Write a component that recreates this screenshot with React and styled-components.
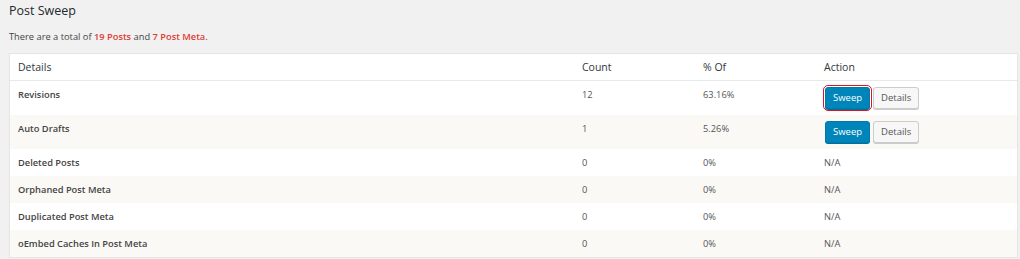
import styled, { createGlobalStyle } from "styled-components"

const GlobalStyle = createGlobalStyle`
    body {
        margin: 0;
        background: #f1f1f1;
        font-family: "Open Sans", "Noto Sans", sans-serif;
        color: #444;
    }
`

const Page = styled.div`
    padding: 2px 2px 0 9px;
`

const Title = styled.h2`
    margin: 0;
    font-size: 12.5px;
    line-height: 17px;
    font-weight: 400;
    color: #23282d;
`

const Summary = styled.p`
    margin: 11px 0 0;
    font-size: 9.3px;
    line-height: 14px;
    color: #444;
`

const Highlight = styled.span`
    color: #dd3d36;
    font-weight: 600;
`

const Table = styled.div`
    margin-top: 9px;
    background: #fff;
    border: 1px solid #e5e5e5;
    box-shadow: 0 1px 1px rgba(0, 0, 0, 0.04);
`

const Row = styled.div`
    display: grid;
    grid-template-columns: 564px 121px 121px 1fr;
    background: ${props => (props.$alt ? "#fbf9f5" : "#fff")};
    border-bottom: ${props => (props.$head ? "1px solid #e8e8e8" : "none")};
    min-height: ${props => (props.$head ? "26px" : "27px")};
`

const Cell = styled.div`
    padding: ${props => (props.$head ? "6px 8px" : "7px 8px 6px")};
    font-size: ${props => (props.$head ? "10.5px" : "9.3px")};
    line-height: 14px;
    font-weight: ${props => (props.$label ? 600 : 400)};
    color: ${props => (props.$head ? "#32373c" : props.$label ? "#444" : "#555")};
`

const Actions = styled.div`
    display: flex;
    gap: 3px;
    padding: 6px 8px 6px 9px;
`

const Button = styled.button`
    height: 22px;
    padding: 0 7px;
    border-radius: 3px;
    font-family: inherit;
    font-size: 9.5px;
    line-height: 20px;
    cursor: pointer;
    background: ${props => (props.$primary ? "#0085ba" : "#f7f7f7")};
    color: ${props => (props.$primary ? "#fff" : "#555")};
    border: 1px solid ${props => (props.$primary ? "#0079ad" : "#ccc")};
    box-shadow: 0 1px 0 ${props => (props.$primary ? "#00709f" : "#ccc")};
    outline: ${props => (props.$focus ? "1px solid #e0141e" : "none")};
    outline-offset: 1px;
`

const rows = [
    { label: "Revisions", count: 12, pct: "63.16%", action: true, focus: true },
    { label: "Auto Drafts", count: 1, pct: "5.26%", action: true },
    { label: "Deleted Posts", count: 0, pct: "0%" },
    { label: "Orphaned Post Meta", count: 0, pct: "0%" },
    { label: "Duplicated Post Meta", count: 0, pct: "0%" },
    { label: "oEmbed Caches In Post Meta", count: 0, pct: "0%" },
]

const App = () => {
  return (
    <Page>
        <GlobalStyle />
        <Title>Post Sweep</Title>
        <Summary>
            There are a total of <Highlight>19 Posts</Highlight> and <Highlight>7 Post Meta</Highlight>.
        </Summary>
        <Table>
            <Row $head>
                <Cell $head>Details</Cell>
                <Cell $head>Count</Cell>
                <Cell $head>% Of</Cell>
                <Cell $head>Action</Cell>
            </Row>
            {rows.map((r, i) => (
                <Row key={r.label} $alt={i % 2 === 1}>
                    <Cell $label>{r.label}</Cell>
                    <Cell>{r.count}</Cell>
                    <Cell>{r.pct}</Cell>
                    {r.action ? (
                        <Actions>
                            <Button $primary $focus={r.focus}>Sweep</Button>
                            <Button>Details</Button>
                        </Actions>
                    ) : (
                        <Cell>N/A</Cell>
                    )}
                </Row>
            ))}
        </Table>
    </Page>
  )
}

export default App
